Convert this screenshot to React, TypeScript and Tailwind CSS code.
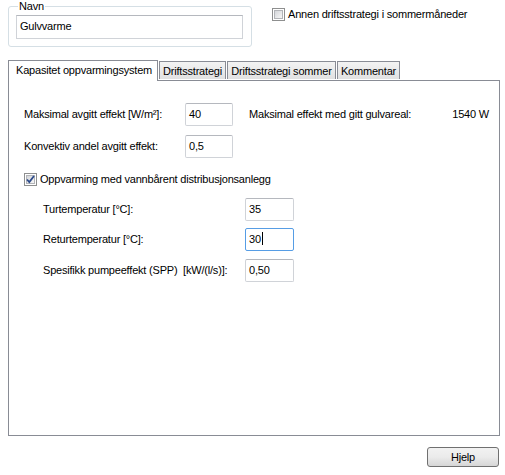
import React from "react";

const Check = ({ checked = false }: { checked?: boolean }) => (
  <span className="relative flex h-[13px] w-[13px] shrink-0 items-center justify-center border border-[#8e8f8f] bg-white">
    <span className="flex h-[9px] w-[9px] items-center justify-center border border-[#b2b4b8] bg-gradient-to-br from-[#d4d6da] to-[#f7f7f7]">
      {checked && (
        <svg width="9" height="9" viewBox="0 0 9 9" className="overflow-visible">
          <path d="M1 4.5 L3.3 7 L8 1" fill="none" stroke="#2c4a8a" strokeWidth="1.8" />
        </svg>
      )}
    </span>
  </span>
);

const Field = ({ value, w, focused = false, caret = false }: { value: string; w: string; focused?: boolean; caret?: boolean }) => (
  <div
    className={`h-[23px] ${w} rounded-[2px] border px-[3px] pt-[1px] leading-[18px] ${
      focused ? "border-[#569de5]" : "border-[#d0d3d8] border-t-[#b5b8be]"
    } bg-white`}
  >
    {value}
    {caret && <span className="ml-[1px] inline-block h-[13px] w-px translate-y-[2px] bg-black" />}
  </div>
);

const Tab = ({ title, w }: { title: string; w: string }) => (
  <div className={`mb-px ml-px flex h-[18px] ${w} justify-center whitespace-nowrap border border-b-0 border-[#898c95] bg-gradient-to-b from-[#f3f3f3] to-[#e1e1e1] pt-[3px] leading-[13px]`}>
    {title}
  </div>
);

export default function App() {
  return (
    <div className="h-[475px] w-[505px] bg-white font-['Liberation_Sans',Arial,sans-serif] text-[11px] tracking-[-0.2px] text-black">
      <div className="flex">
        <fieldset className="ml-[8px] w-[244px] rounded-[3px] border border-[#d5dfe5] px-[7px] pb-[7px]">
          <legend className="ml-[2px] px-[1px] leading-[13px]">Navn</legend>
          <div className="mt-[2px] h-[24px] w-[227px] border border-[#d0d3d8] border-t-[#b5b8be] px-[3px] leading-[20px]">
            Gulvvarme
          </div>
        </fieldset>
        <div className="ml-[20px] mt-[8px] flex h-[13px] items-center gap-[3px]">
          <Check />
          <span>Annen driftsstrategi i sommermåneder</span>
        </div>
      </div>

      <div className="ml-[8px] mt-[13px] flex items-end">
        <div className="relative z-10 -mb-px h-[21px] w-[150px] whitespace-nowrap border border-b-0 border-[#898c95] bg-white pl-[7px] pt-[3px] leading-[13px]">
          Kapasitet oppvarmingsystem
        </div>
        <Tab title="Driftsstrategi" w="w-[67px]" />
        <Tab title="Driftsstrategi sommer" w="w-[109px]" />
        <Tab title="Kommentar" w="w-[63px]" />
      </div>

      <div className="ml-[8px] h-[356px] w-[492px] border border-[#898c95] pl-[15px] pr-[10px] pt-[22px]">
        <div className="flex h-[23px] items-center">
          <span className="w-[161px]">Maksimal avgitt effekt [W/m²]:</span>
          <Field value="40" w="w-[48px]" />
          <span className="ml-[16px] flex-1">Maksimal effekt med gitt gulvareal:</span>
          <span>1540 W</span>
        </div>
        <div className="mt-[9px] flex h-[23px] items-center">
          <span className="w-[161px]">Konvektiv andel avgitt effekt:</span>
          <Field value="0,5" w="w-[48px]" />
        </div>
        <div className="mt-[15px] flex h-[13px] items-center gap-[3px]">
          <Check checked />
          <span>Oppvarming med vannbårent distribusjonsanlegg</span>
        </div>
        <div className="ml-[19px] mt-[12px] flex flex-col gap-[7px]">
          <div className="flex h-[23px] items-center">
            <span className="w-[202px]">Turtemperatur [°C]:</span>
            <Field value="35" w="w-[49px]" />
          </div>
          <div className="flex h-[23px] items-center">
            <span className="w-[202px]">Returtemperatur [°C]:</span>
            <Field value="30" w="w-[49px]" focused caret />
          </div>
          <div className="mt-px flex h-[23px] items-center">
            <span className="w-[202px]">Spesifikk pumpeeffekt (SPP)&nbsp; [kW/(l/s)]:</span>
            <Field value="0,50" w="w-[49px]" />
          </div>
        </div>
      </div>

      <div className="mr-[6px] mt-[11px] flex justify-end">
        <button className="h-[20px] w-[72px] rounded-[3px] border border-[#707070] bg-gradient-to-b from-[#f2f2f2] via-[#ebebeb] to-[#d6d6d6] leading-[18px]">
          Hjelp
        </button>
      </div>
    </div>
  );
}
